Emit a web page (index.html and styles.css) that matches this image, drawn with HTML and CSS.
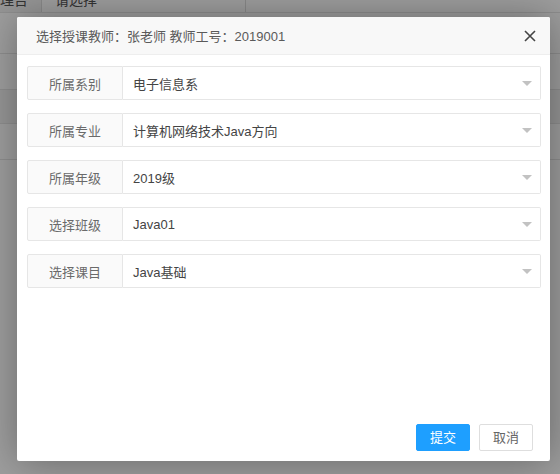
FILE: index.html
```html
<!DOCTYPE html>
<html lang="zh-CN">
<head>
<meta charset="utf-8">
<title>选择授课教师</title>
<link rel="stylesheet" href="styles.css">
</head>
<body>
<div class="page">
  <div class="page-top">
    <div class="cell cell-a">管理台</div>
    <div class="cell cell-b">请选择</div>
  </div>
  <div class="page-row r1"></div>
  <div class="page-row r2"></div>
  <div class="page-row r3"></div>
  <div class="page-row r4"></div>
</div>
<div class="shade"></div>
<div class="dialog">
  <div class="dialog-header">
    <span class="title">选择授课教师：张老师 教师工号：2019001</span>
    <svg class="close" width="12" height="12" viewBox="0 0 12 12"><path d="M1 1 L11 11 M11 1 L1 11" stroke="#444" stroke-width="1.6" fill="none"/></svg>
  </div>
  <div class="dialog-body">
    <div class="form-row"><div class="label">所属系别</div><div class="select"><span class="value">电子信息系</span><i class="arrow"></i></div></div>
    <div class="form-row"><div class="label">所属专业</div><div class="select"><span class="value">计算机网络技术Java方向</span><i class="arrow"></i></div></div>
    <div class="form-row"><div class="label">所属年级</div><div class="select"><span class="value">2019级</span><i class="arrow"></i></div></div>
    <div class="form-row"><div class="label">选择班级</div><div class="select"><span class="value">Java01</span><i class="arrow"></i></div></div>
    <div class="form-row"><div class="label">选择课目</div><div class="select"><span class="value">Java基础</span><i class="arrow"></i></div></div>
  </div>
  <div class="dialog-footer">
    <button class="btn btn-primary">提交</button>
    <button class="btn">取消</button>
  </div>
</div>
</body>
</html>
```
FILE: styles.css
```css
html, body {
  margin: 0;
  padding: 0;
}
body {
  width: 560px;
  height: 474px;
  overflow: hidden;
  position: relative;
  background: #fff;
  font-family: "Liberation Sans", "Noto Sans CJK SC", sans-serif;
  font-size: 13px;
}
.page {
  width: 560px;
  height: 474px;
}
.page-top {
  height: 12px;
  display: flex;
  overflow: hidden;
  background: #fff;
  border-bottom: 1px solid #e6e6e6;
}
.cell {
  line-height: 12px;
  margin-top: -6px;
  color: #555;
  font-size: 14px;
}
.cell-a {
  width: 55px;
  padding-left: 0;
  margin-left: -14px;
  border-right: 1px solid #ddd;
  background: #f2f2f2;
  text-align: left;
}
.cell-b {
  width: 190px;
  padding-left: 13px;
  border-right: 1px solid #ddd;
}
.page-row {
  border-bottom: 1px solid #e6e6e6;
}
.r1 { height: 40px; }
.r2 { height: 35px; }
.r3 { height: 33px; background: #f2f2f2; }
.r4 { height: 35px; }
.shade {
  position: absolute;
  inset: 0;
  background: rgba(0, 0, 0, 0.38);
}
.dialog {
  position: absolute;
  left: 17px;
  top: 17px;
  width: 533px;
  height: 444px;
  background: #fff;
  border-radius: 2px;
  box-shadow: 1px 1px 40px rgba(0, 0, 0, 0.35);
  display: flex;
  flex-direction: column;
}
.dialog-header {
  height: 37px;
  background: #f8f8f8;
  border-bottom: 1px solid #eee;
  border-radius: 2px 2px 0 0;
  display: flex;
  align-items: center;
  justify-content: space-between;
  padding: 0 14px 0 19px;
}
.title {
  color: #5a5a5a;
  font-size: 13px;
}
.close {
  display: block;
}
.dialog-body {
  flex: 1;
  padding: 11px 9px 0 10px;
}
.form-row {
  display: flex;
  height: 34px;
  margin-bottom: 13px;
}
.label {
  width: 94px;
  border: 1px solid #e6e6e6;
  background: #fafafa;
  color: #6a6a6a;
  display: flex;
  align-items: center;
  justify-content: center;
  border-radius: 2px 0 0 2px;
}
.select {
  flex: 1;
  border: 1px solid #e6e6e6;
  border-left: none;
  display: flex;
  align-items: center;
  justify-content: space-between;
  padding: 0 8px 0 10px;
  border-radius: 0 2px 2px 0;
}
.value {
  color: #444;
}
.arrow {
  width: 0;
  height: 0;
  border-left: 5px solid transparent;
  border-right: 5px solid transparent;
  border-top: 5px solid #c2c2c2;
}
.dialog-footer {
  display: flex;
  justify-content: flex-end;
  gap: 9px;
  padding: 0 17px 10px 0;
}
.btn {
  height: 27px;
  padding: 0 13px;
  border: 1px solid #dedede;
  background: #fff;
  color: #666;
  font-family: "Liberation Sans", "Noto Sans CJK SC", sans-serif;
  font-size: 13px;
  border-radius: 2px;
  line-height: 25px;
}
.btn-primary {
  background: #1e9fff;
  border-color: #1e9fff;
  color: #fff;
}
```
